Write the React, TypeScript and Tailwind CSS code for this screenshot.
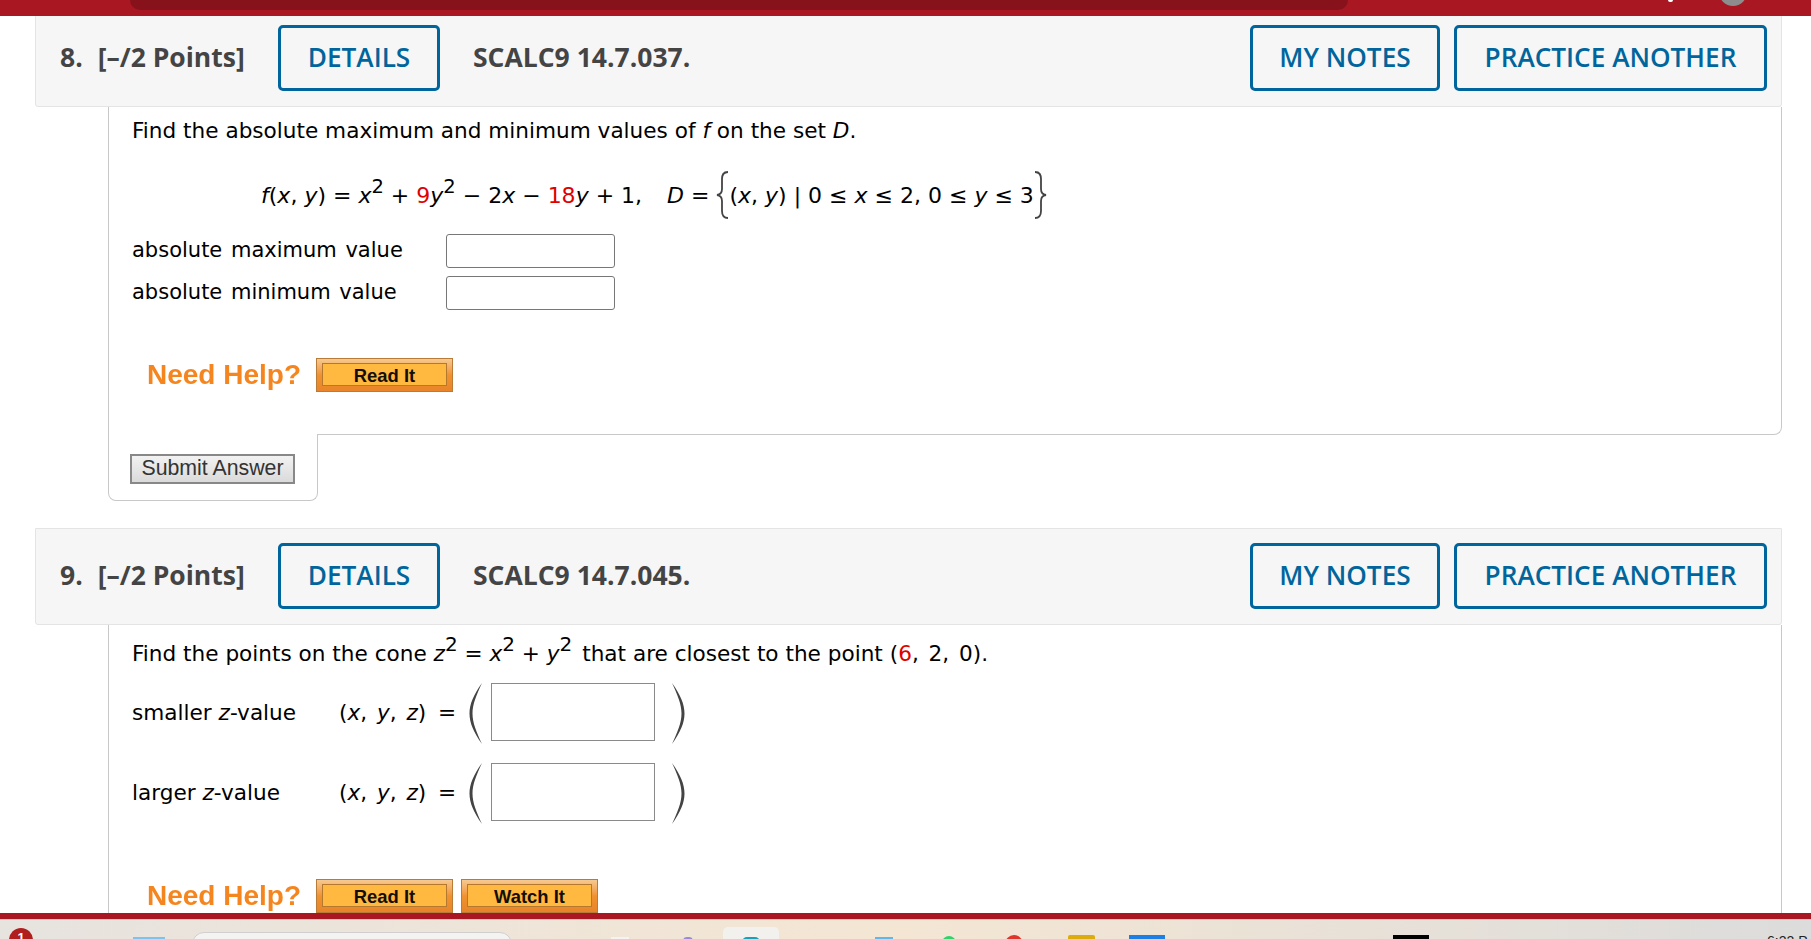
const headerBtn =
  "h-[66px] rounded-[5px] border-[3px] border-[#00659c] flex items-center justify-center text-[26.2px] font-semibold text-[#00659c]";

function QuestionHeader({ num, code }: { num: string; code: string }) {
  return (
    <div className="ml-[35px] mr-[29px] h-[97px] flex items-center rounded-b-[3px] border border-[#e4e4e4] bg-[#f6f6f6] pl-[24px] pr-[14px] pb-[2px] font-['Open_Sans',sans-serif]">
      <div className="w-[218px] text-[26.5px] font-bold text-[#444] whitespace-nowrap">
        {num}
        <span className="ml-[15px]">[–/2 Points]</span>
      </div>
      <button className={`${headerBtn} w-[162px]`}>DETAILS</button>
      <div className="ml-[33px] text-[26.5px] font-bold text-[#444]">{code}</div>
      <button className={`${headerBtn} ml-auto w-[190px]`}>MY NOTES</button>
      <button className={`${headerBtn} ml-[14px] w-[313px]`}>PRACTICE ANOTHER</button>
    </div>
  );
}

function HelpButton({ label }: { label: string }) {
  return (
    <div className="w-[137px] h-[34px] border border-[#b97c38] bg-gradient-to-b from-[#f6c98f] via-[#f0922f] to-[#e8842a] p-[4px_5px_5px_5px]">
      <div className="h-full border border-[#b5782f] bg-[#ffb840] flex items-center justify-center pt-[2px] text-[18.4px] font-bold text-[#140e04] font-['Liberation_Sans',sans-serif]">
        {label}
      </div>
    </div>
  );
}

function NeedHelp({ children }: { children: React.ReactNode }) {
  return (
    <div className="flex items-center gap-[17px] pl-[38px]">
      <span className="w-[152px] text-[28px] leading-[34px] font-bold text-[#f5861f] font-['Liberation_Sans',sans-serif] whitespace-nowrap blur-[0.4px]">
        Need Help?
      </span>
      <div className="flex gap-[8px]">{children}</div>
    </div>
  );
}

function Brace({ flip }: { flip?: boolean }) {
  return (
    <svg width="13" height="48" viewBox="0 0 13 48" className={flip ? "-scale-x-100" : ""}>
      <path
        d="M12 1C7 1 6 4 6 8V18C6 21 4.5 23.5 1 24C4.5 24.5 6 27 6 30V40C6 44 7 47 12 47"
        fill="none"
        stroke="#444"
        strokeWidth="1.8"
      />
    </svg>
  );
}

function Paren({ flip }: { flip?: boolean }) {
  return (
    <svg width="16" height="63" viewBox="0 0 16 63" className={`mt-[3px] ${flip ? "-scale-x-100" : ""}`}>
      <path
        d="M14 1C5.5 13 1.5 22 1.5 31.5C1.5 41 5.5 50 14 62C8.5 50 4.5 41 4.5 31.5C4.5 22 8.5 13 14 1Z"
        fill="#444"
      />
    </svg>
  );
}

function TupleRow({ label }: { label: React.ReactNode }) {
  return (
    <div className="flex items-center h-[63px]">
      <div className="w-[207px] pt-[3px]">{label}</div>
      <div className="w-[99px] whitespace-nowrap pt-[3px] [word-spacing:3px]">
        (<i>x</i>, <i>y</i>, <i>z</i>)
      </div>
      <div className="w-[30px] pt-[3px]">=</div>
      <Paren />
      <input className="ml-[7px] w-[164px] h-[58px] border border-[#8a8a8a] bg-white" />
      <div className="w-[15px]" />
      <Paren flip />
    </div>
  );
}

export default function App() {
  return (
    <div className="h-[939px] overflow-hidden bg-white flex flex-col relative">
      {/* browser/page top strip */}
      <div className="h-[16px] shrink-0 bg-[#a81722] relative">
        <div className="ml-[130px] w-[1218px] h-[10px] rounded-b-[12px] bg-[#88121b]" />
        <div className="absolute left-[1668px] top-0 w-[5px] h-[2px] rounded-b-full bg-white" />
        <div className="absolute left-[1719px] top-[-22px] w-[28px] h-[28px] rounded-full bg-[#8d8d8d]" />
      </div>

      <div className="flex-1 min-h-0 overflow-hidden font-['DejaVu_Sans',Verdana,sans-serif] text-[21.6px] text-black">
        <div className="-mt-[6px]">
          <QuestionHeader num="8." code="SCALC9 14.7.037." />
        </div>

        {/* question 8 */}
        <div className="ml-[108px] mr-[29px]">
          <div className="h-[328px] border-x border-b border-[#c8c8c8] rounded-br-[8px] pl-[23px] pt-[11px]">
            <p className="leading-[26px] whitespace-nowrap">
              Find the absolute maximum and minimum values of <i>f</i> on the set <i>D</i>.
            </p>
            <div className="ml-[129px] mt-[27px] h-[48px] flex items-center whitespace-pre text-[22px]">
              <span>
                <i>f</i>(<i>x</i>, <i>y</i>) = <i>x</i><sup className="text-[19.5px]">2</sup> + <span className="text-[#e00000]">9</span><i>y</i><sup className="text-[19.5px]">2</sup> − 2<i>x</i> − <span className="text-[#e00000]">18</span><i>y</i> + 1,{"   "}<i className="ml-[4px]">D</i> ={" "}
              </span>
              <Brace />
              <span>
                (<i>x</i>, <i>y</i>) | 0 ≤ <i>x</i> ≤ 2, 0 ≤ <i>y</i> ≤ 3
              </span>
              <Brace flip />
            </div>
            <div className="mt-[15px] flex items-center h-[34px] text-[21px] [word-spacing:2px]">
              <span className="w-[314px]">absolute maximum value</span>
              <input className="w-[169px] h-[34px] rounded-[3px] border border-[#777] bg-white" />
            </div>
            <div className="mt-[8px] flex items-center h-[34px] text-[21px] [word-spacing:2px]">
              <span className="w-[314px]">absolute minimum value</span>
              <input className="w-[169px] h-[34px] rounded-[3px] border border-[#777] bg-white" />
            </div>
            <div className="mt-[48px] -ml-[23px]">
              <NeedHelp>
                <HelpButton label="Read It" />
              </NeedHelp>
            </div>
          </div>
          <div className="relative -mt-px w-[210px] h-[67px] border-x border-b border-[#c8c8c8] rounded-b-[8px] bg-white pl-[21px] pt-[18px]">
            <button className="w-[165px] h-[30px] border-2 border-[#888] bg-gradient-to-b from-[#f2f2f2] to-[#dadada] text-[21.3px] leading-none text-[#333] font-['Liberation_Sans',sans-serif]">
              Submit Answer
            </button>
          </div>
        </div>

        <div className="mt-[27px]">
          <QuestionHeader num="9." code="SCALC9 14.7.045." />
        </div>

        {/* question 9 */}
        <div className="ml-[108px] mr-[29px] border-x border-[#c8c8c8] pl-[23px] pt-[16px] h-[300px]">
          <p className="leading-[26px] whitespace-nowrap">
            Find the points on the cone <i>z</i><sup className="text-[20px]">2</sup> = <i>x</i><sup className="text-[20px]">2</sup> + <i>y</i><sup className="text-[20px]">2</sup><span className="ml-[3px]"> that are closest to the point</span> <span className="[word-spacing:3px]">(<span className="text-[#e00000]">6</span>, 2, 0).</span>
          </p>
          <div className="mt-[13px]">
            <TupleRow label={<>smaller <i>z</i>-value</>} />
          </div>
          <div className="mt-[17px]">
            <TupleRow label={<>larger <i>z</i>-value</>} />
          </div>
          <div className="mt-[56px] -ml-[23px]">
            <NeedHelp>
              <HelpButton label="Read It" />
              <HelpButton label="Watch It" />
            </NeedHelp>
          </div>
        </div>
      </div>

      {/* bottom strip + taskbar */}
      <div className="absolute left-0 right-0 top-[913px] h-[6px] bg-[#a81722]" />
      <div className="absolute left-0 right-0 top-[919px] h-[20px] overflow-hidden border-t border-[#c9c9c9] bg-gradient-to-r from-[#e7e3df] via-[#f4e6d3] to-[#dcdcdc] flex items-start">
        <div className="ml-[9px] mt-[8px] w-[24px] h-[24px] rounded-full bg-[#b01e1e] text-white text-[13px] font-bold text-center font-['Liberation_Sans',sans-serif]">
          1
        </div>
        <div className="ml-[100px] mt-[17px] w-[32px] h-[4px] bg-[#7cc4ee]" />
        <div className="ml-[27px] mt-[12px] w-[320px] h-[24px] rounded-full bg-[#f4f3f2] border border-[#cfcfcf]" />
        <div className="ml-[99px] mt-[17px] w-[18px] h-[4px] bg-[#f3f3f3]" />
        <div className="ml-[54px] mt-[17px] w-[10px] h-[4px] rounded-t-full bg-[#9a88d8]" />
        <div className="ml-[30px] mt-[7px] w-[56px] h-[24px] rounded-t-[5px] bg-[#f3f1ee] flex justify-center">
          <div className="mt-[10px] w-[18px] h-[10px] rounded-full bg-[#14a3b8]" />
        </div>
        <div className="ml-[96px] mt-[17px] w-[18px] h-[4px] bg-[#5eb8ec]" />
        <div className="ml-[49px] mt-[16px] w-[14px] h-[14px] rounded-full bg-[#2fd36b]" />
        <div className="ml-[49px] mt-[15px] w-[18px] h-[18px] rounded-full bg-[#e0352b]" />
        <div className="ml-[45px] mt-[15px] w-[27px] h-[6px] rounded-t-[2px] bg-[#dcab0c]" />
        <div className="ml-[34px] mt-[15px] w-[36px] h-[6px] bg-[#1c7fe8]" />
        <div className="ml-[228px] mt-[15px] w-[36px] h-[6px] bg-black" />
        <div className="ml-[338px] mt-[14px] text-[14px] leading-none text-[#222] font-['Liberation_Sans',sans-serif] whitespace-nowrap">
          6:22 P
        </div>
      </div>
    </div>
  );
}
